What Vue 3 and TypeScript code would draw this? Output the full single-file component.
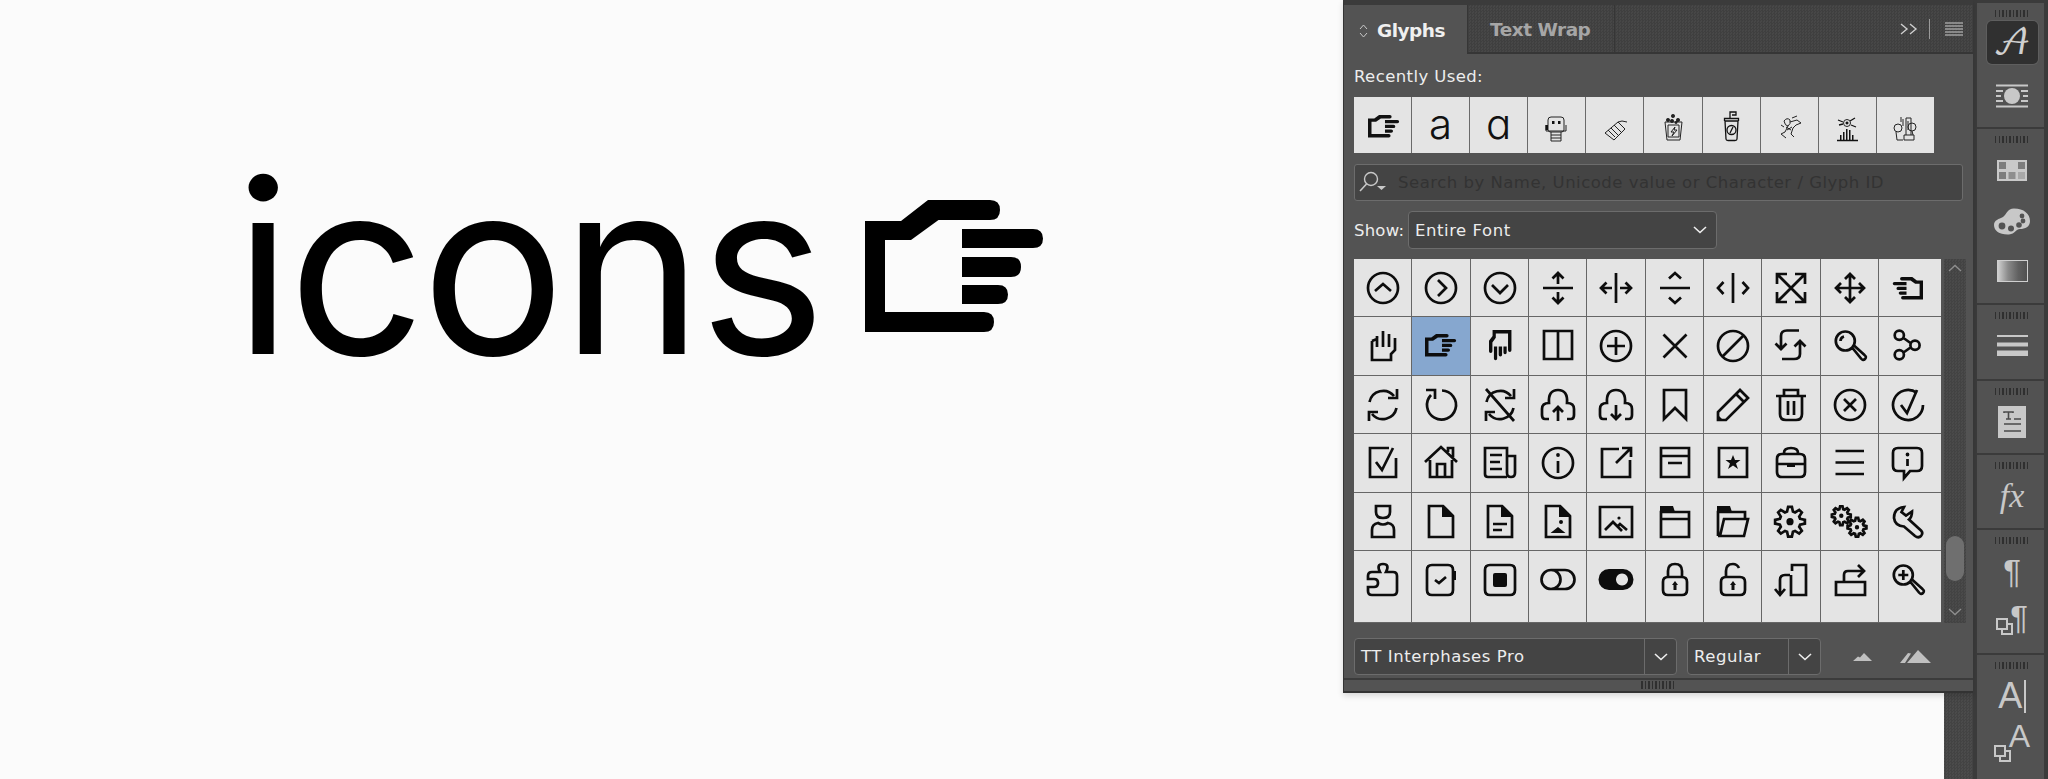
<script setup lang="ts">
interface Glyph { s?: string; f?: string; t?: string; sel?: boolean }

const C = (x: number, y: number, r: number): string =>
  `M${x - r} ${y}a${r} ${r} 0 1 0 ${2 * r} 0a${r} ${r} 0 1 0 ${-2 * r} 0Z`

const gear = (cx: number, cy: number, ro: number, ri: number, n: number): string => {
  const pts: string[] = []
  const step = (Math.PI * 2) / n
  for (let i = 0; i < n; i++) {
    const a = i * step
    const p = (r: number, o: number) =>
      `${(cx + r * Math.cos(a + o)).toFixed(2)} ${(cy + r * Math.sin(a + o)).toFixed(2)}`
    pts.push(p(ri, -step * 0.36), p(ro, -step * 0.16), p(ro, step * 0.16), p(ri, step * 0.36))
  }
  return 'M' + pts.join('L') + 'Z'
}

const HAND =
  'M0 21H36L63 0H125Q135 0 135 10Q135 20 125 20H73.5L46 40H20V112H119Q129 112 129 122Q129 132 119 132H0Z' +
  'M97 29H168Q178 29 178 38.5Q178 48 168 48H97Z' +
  'M97 57H146Q156 57 156 67Q156 77 146 77H97Z' +
  'M97 85H133Q143 85 143 94.5Q143 104 133 104H97Z'
const RIGHT = 'matrix(.175 0 0 .17 13 17)'
const HANDLE = 'M31.5 31L40 41.5Q42 44 44 42Q46 40 43.5 38L33 28.5'
const DOC = 'M17 13H31L41 23V44H17Z'
const CORNER = 'M30 12V24H42V22.5L31.5 12Z'
const SYNC = 'M15.5 26A14 14 0 0 1 40 20M34 22H43V13M42.5 32A14 14 0 0 1 18 38M24 36H15V45'
const CLOUD = 'M20 43H16Q13 43 13 39V33Q13 27 20 27Q19 14 29 14Q39 14 38 27Q45 27 45 33V39Q45 43 42 43H38'
const LOCK = 'M22 26H36Q41 26 41 31V39Q41 44 36 44H22Q17 44 17 39V31Q17 26 22 26Z'
const KEY = 'M29 30L32 34H30.5V39H27.5V34H26Z'

const glyphs: Glyph[] = [
  { s: C(29, 29, 15) + 'M21 32l8-7 8 7' },
  { s: C(29, 29, 15) + 'M26 21l8 8-8 8' },
  { s: C(29, 29, 15) + 'M21 26l8 8 8-8' },
  { s: 'M14 29H44M29 25V14M23.5 19.5L29 14l5.5 5.5M29 33V44M23.5 38.5L29 44l5.5-5.5' },
  { s: 'M29 14V44M25 29H14M19.5 23.5L14 29l5.5 5.5M33 29H44M38.5 23.5L44 29l-5.5 5.5' },
  { s: 'M14 29H44M23 19.5l6-5.5 6 5.5M23 38.5l6 5.5 6-5.5' },
  { s: 'M29 14V44M19.5 23l-5.5 6 5.5 6M38.5 23l5.5 6-5.5 6' },
  { s: 'M15 15L43 43M43 15L15 43M15 25V15H25M33 15H43V25M15 33V43H25M43 33V43H33' },
  { s: 'M29 15V43M15 29H43M24 20l5-5 5 5M24 38l5 5 5-5M20 24l-5 5 5 5M38 24l5 5-5 5' },
  { f: HAND, t: 'matrix(-.17 0 0 .17 44 18)' },

  { s: 'M18 24L23 22V30M18 24V43H37V37L41 33V21M29 14V30M35 17V30M23 19V30' },
  { f: HAND, t: RIGHT, sel: true },
  { f: HAND, t: 'matrix(0 .17 .17 0 18 13)' },
  { s: 'M15 14H29V42H15ZM29 14H43V42H29Z' },
  { s: C(29, 29, 15) + 'M29 20V38M20 29H38' },
  { s: 'M17.5 17.5L40.5 40.5M40.5 17.5L17.5 40.5' },
  { s: C(29, 29, 15) + 'M19 39L39 19' },
  { s: 'M37 13.5H25Q19 13.5 19 19V33M13.5 26.5L19 32l5.5-5.5M20 42H32Q38 42 38 37V24M32.5 29.5L38 24l5.5 5.5' },
  { s: C(24.3, 24, 9.5) + HANDLE + 'M19.5 24Q19.5 20.5 23 19.5' },
  { s: C(20.3, 18.3, 4.6) + C(36, 28.3, 4.6) + C(20.3, 37.8, 4.6) + 'M24.5 21L31.5 26M24.5 35.5L31.5 30.5' },

  { s: SYNC },
  { s: 'M30 14.5A14.5 14.5 0 1 1 19 19M14 14H23V23' },
  { s: SYNC + 'M15 13L43 45' },
  { s: CLOUD + 'M29 45V31M24 36l5-5 5 5' },
  { s: CLOUD + 'M29 29V43M24 38l5 5 5-5' },
  { s: 'M18 14H40V43L29 32L18 43Z' },
  { s: 'M14 44V36L36 14L44 22L22 44ZM32 18L40 26', f: 'M13 45V38L20 45Z' },
  { s: 'M14 20H44M22 20V14H36V20M18 20V38Q18 44 24 44H34Q40 44 40 38V20M26 25V39M32 25V39' },
  { s: C(29, 29, 15) + 'M23 23L35 35M35 23L23 35' },
  { s: 'M38 17A15 15 0 1 0 44 29M22 29L28 37L38 14' },

  { s: 'M42 24V43H16V14H35M22 28L28 36L39 14' },
  { s: 'M13 28L29 13L45 28M18 26V43H40V26M25 43V30H33V43M36 18V14H41V23' },
  { s: 'M36 43H17Q14 43 14 40V14H36V39Q36 43 40 43Q44 43 44 39V22H36M19 21H31M19 28H29M19 35H31' },
  { s: C(29, 29, 15) + 'M29 27V39', f: C(29, 21, 1.9) },
  { s: 'M32 15H15V43H43V26M29 29L43 15M35 14H44V23' },
  { s: 'M15 14H43V43H15ZM15 22H43M22 29H36' },
  { s: 'M15 14H43V43H15Z', f: 'M29 21L31 26H36.5L32 29.5L34 35L29 31.5L24 35L26 29.5L21.5 26H27Z' },
  { s: 'M20 20H38Q43 20 43 25V38Q43 43 38 43H20Q15 43 15 38V25Q15 20 20 20ZM22 20V19Q22 14 29 14Q36 14 36 19V20M15 30H43', f: 'M25 29H33V33H25Z' },
  { s: 'M14.5 17H43M14.5 28.5H43M14.5 40H43' },
  { s: 'M19 14H38Q43 14 43 19V32Q43 37 38 37H31L25 44V37H19Q14 37 14 32V19Q14 14 19 14ZM28.5 25V32', f: C(28.5, 20.5, 1.9) },

  { s: 'M22 13H36V19Q36 25 29 25Q22 25 22 19ZM18 44V37Q18 31 24 30Q29 33 34 30Q40 31 40 37V44Z' },
  { s: DOC, f: CORNER },
  { s: DOC + 'M22 31H36M22 37H31', f: CORNER },
  { s: DOC, f: CORNER + 'M21.5 40L29 34L36.5 40ZM30 29a2 2 0 1 0 4 0a2 2 0 1 0-4 0Z' },
  { s: 'M13 14H45V44H13ZM18 37L26 29L35 38M31 33L33 31L40 37', f: C(32, 25, 1.6) },
  { s: 'M15 44V19H43V44ZM15 26H43', f: 'M14 13H27L29 19H14Z' },
  { s: 'M14 43V19H41V26M14 43H40L44 26H20L16 43', f: 'M13 13H26L28 19H13Z' },
  { s: gear(28, 28.7, 15, 10.5, 8), f: C(28, 28.7, 3.6) },
  { s: gear(20.3, 22.7, 9.5, 6.8, 8) + gear(36, 34.3, 9.5, 6.8, 8), f: C(20.3, 22.7, 2.2) + C(36, 34.3, 2.2) },
  { s: 'M25 14Q15 15 15 25Q16 33 25 33.5L36 43Q39.5 45.5 42 43Q44.5 40 42 37.5L30 26.5Q33 24 33 18.5L27 22.5L22.5 19Z' },

  { s: 'M26 21Q22 13 29 13Q36 13 32 21H39Q43 21 43 25V40Q43 44 39 44H18Q14 44 14 40V36H20Q24 36 24 32Q24 28 20 28H14V25Q14 21 18 21Z' },
  { s: 'M20 14H36Q41 14 41 19V39Q41 44 36 44H20Q15 44 15 39V19Q15 14 20 14ZM23 29l4 3 7-6', f: 'M41 20H44V29H41Z' },
  { s: 'M19 14H39Q44 14 44 19V39Q44 44 39 44H19Q14 44 14 39V19Q14 14 19 14Z', f: 'M24 22H34Q36 22 36 24V34Q36 36 34 36H24Q22 36 22 34V24Q22 22 24 22Z' },
  { s: 'M22 19H36A9.5 9.5 0 0 1 36 38H22A9.5 9.5 0 0 1 22 19Z' + C(22, 28.5, 9.5) },
  { f: 'M22 18H36A10.5 10.5 0 0 1 36 39H22A10.5 10.5 0 0 1 22 18ZM35 22.5a6 6 0 1 0 .01 0Z' },
  { s: LOCK + 'M22 26V20Q22 13 29 13Q36 13 36 20V26', f: KEY },
  { s: LOCK + 'M22 26V20Q22 13 29 13Q33 13 35 17', f: KEY },
  { s: 'M30 20V14H44V44H29V24M28 24H23Q18 24 18 29V43M13 38l5 6 5-6' },
  { s: 'M23 31H44V44H15V31H23ZM23 31V24Q23 20 27 20H42M37 14L43 20L37 26' },
  { s: C(24.3, 24, 9.5) + HANDLE + 'M24.3 19V29M19.3 24H29.3' }
]
</script>

<template>
  <div class="page">
    <main class="canvas">
      <div class="logo">
        <span class="word">icons</span>
        <svg class="big-hand" viewBox="0 0 178 132" width="178" height="132" aria-hidden="true"><path :d="HAND" fill="#000" /></svg>
      </div>
    </main>
    <div class="gutter"></div>
    <aside class="toolbar">
      <section class="tool-sec s1">
        <i class="grip"></i>
        <div class="char-btn"><span class="script-a">𝒜</span></div>
        <svg class="wrap-ic" width="32" height="24" viewBox="0 0 32 24"><path d="M0 1.5H32M0 22.5H32M0 7H7M25 7H32M0 12H5M27 12H32M0 17H7M25 17H32" stroke="#c8c8c8" stroke-width="2" /><circle cx="16" cy="12" r="8" fill="#c8c8c8" /></svg>
      </section>
      <section class="tool-sec s2">
        <i class="grip"></i>
        <svg class="tool-ic swatches" width="30" height="21" viewBox="0 0 30 21"><rect width="30" height="21" fill="#c9c9c9" /><path d="M2 2h7v7H2zM21 2h7v7h-7zM2 12h7v7H2z" fill="#7d7d7d" /><path d="M11.5 12h7v7h-7z" fill="#8e8e8e" /><path d="M21 12h7v7h-7z" fill="#a8a8a8" /></svg>
        <svg class="tool-ic palette" width="36" height="27" viewBox="0 0 36 27"><path d="M20 .5C30 .5 36 6 36 13 36 19 31 21 26 21 22 21 21 26 15 26.500 6 27 0 23 0 17 0 12 5 11 9 9 13 6 13 .5 20 .5Z" fill="#c8c8c8" /><circle cx="8" cy="18" r="3.400" fill="#535353" /><circle cx="17" cy="20.500" r="3" fill="#535353" /><circle cx="25" cy="17" r="2.800" fill="#535353" /><circle cx="29" cy="13" r="2.400" fill="#535353" /><circle cx="28" cy="8" r="2.400" fill="#535353" /></svg>
        <div class="gradient"></div>
      </section>
      <section class="tool-sec s3">
        <i class="grip"></i>
        <svg class="tool-ic lines" width="31" height="21" viewBox="0 0 31 21"><path d="M0 0h31v2H0zM0 7.500h31v4H0zM0 15.500h31V21H0z" fill="#c8c8c8" /></svg>
      </section>
      <section class="tool-sec s4">
        <i class="grip"></i>
        <svg class="tool-ic doc" width="28" height="32" viewBox="0 0 28 32"><rect width="28" height="32" fill="#c8c8c8" /><path d="M6 7V6H15V7M10.500 6V13M8 13H13M16 13H23M6 18H23M6 25H23" stroke="#4a4a4a" stroke-width="1.600" fill="none" /></svg>
      </section>
      <section class="tool-sec s5">
        <i class="grip"></i>
        <span class="fx">fx</span>
      </section>
      <section class="tool-sec s6">
        <i class="grip"></i>
        <div class="para"><span class="para-t">¶</span></div>
        <div class="para para2">
          <svg width="17" height="17" viewBox="0 0 17 17"><path d="M1 1H11V11H1ZM6 11V16H16V6H11" fill="none" stroke="#c8c8c8" stroke-width="2" /></svg>
          <span class="para-t">¶</span>
        </div>
      </section>
      <section class="tool-sec s7">
        <i class="grip"></i>
        <div class="a-bar"><span class="big-a">A</span><i class="caret"></i></div>
        <div class="a-sq">
          <svg width="17" height="17" viewBox="0 0 17 17"><path d="M1 1H11V11H1ZM6 11V16H16V6H11" fill="none" stroke="#c8c8c8" stroke-width="2" /></svg>
          <span class="big-a small">A</span>
        </div>
      </section>
    </aside>

    <div class="panel">
      <div class="tabs">
        <div class="tab active">
          <svg width="9" height="14" viewBox="0 0 9 14"><path d="M1 5l3.500-4L8 5M1 9l3.500 4L8 9" fill="none" stroke="#c8c8c8" stroke-width="1" /></svg>
          <span>Glyphs</span>
        </div>
        <div class="tab off">Text Wrap</div>
        <div class="tab-tools">
          <svg width="18" height="12" viewBox="0 0 18 12"><path d="M1 1l6 5-6 5M10 1l6 5-6 5" fill="none" stroke="#cfcfcf" stroke-width="1.400" /></svg>
          <i class="tab-sep"></i>
          <svg width="18" height="14" viewBox="0 0 18 14"><path d="M0 1h18M0 4h18M0 7h18M0 10h18M0 13h18" stroke="#cfcfcf" stroke-width="1.200" /></svg>
        </div>
      </div>

      <div class="body">
        <div class="recent-label">Recently Used:</div>
        <div class="recent">
          <div class="cell"><svg viewBox="0 0 58 58"><path :d="HAND" fill="#111" transform="matrix(.175 0 0 .17 14 18)" /></svg></div>
          <div class="cell letter"><span>a</span></div>
          <div class="cell letter"><span>ɑ</span></div>
          <div class="cell"><svg viewBox="0 0 58 58"><g class="thin"><path d="M23 20H33Q36 20 36 23V33Q36 35 33 35H23Q20 35 20 33V23Q20 20 23 20ZM18 28V34H38V28M23 35V38H33V35M23 38V44H33V38M23 41H33" /></g><path d="M24 24h2.500v3H24zM30 24h2.500v3H30zM17.500 28h2.500v5h-2.500z" fill="#111" /></svg></div>
          <div class="cell"><svg viewBox="0 0 58 58"><g class="thin"><path d="M19 36L32 25L39 32L28 43ZM22 33L29 40M25 31L32 38M28 28L35 35M32 25L36 24L41 25" /></g></svg></div>
          <div class="cell"><svg viewBox="0 0 58 58"><g class="thin"><path d="M21 25L23 43H36L38 25ZM24 28H35V40H24ZM31 30L27 35H30L28 39L33 33H30Z" /></g><path d="M24 21a2 2 0 1 0 .01 0ZM29 17a2 2 0 1 0 .01 0ZM34 21a2 2 0 1 0 .01 0ZM28 22a2 2 0 1 0 .01 0ZM32 24a1.500 1.500 0 1 0 .01 0Z" fill="#222" /></svg></div>
          <div class="cell"><svg viewBox="0 0 58 58"><g class="thin2"><path d="M22 24H35L34 42Q34 43.500 32 43.500H25Q23 43.500 23 42ZM21.500 24V21.500H35.500V24M27 21V15H33V18H29" /><circle cx="28.500" cy="33" r="4.500" /><path d="M27 36L30 30" /></g></svg></div>
          <div class="cell"><svg viewBox="0 0 58 58"><g class="thin"><path d="M23 24Q26 20 29 23Q30 27 27 29Q24 29 23 24ZM29 25L36 23L40 26L35 28L32 31L30 37L33 40M27 29L24 35L20 37L25 41M20 28L23 30M31 21L36 19M25 30L30 33M26 33L31 30" /></g></svg></div>
          <div class="cell"><svg viewBox="0 0 58 58"><circle cx="28" cy="26" r="3.500" class="thin" /><path d="M28 24.500a1.500 1.500 0 1 0 .01 0Z" fill="#111" /><path d="M19 23L24 25M31 24L36 21M20 28L24 27M32 28L37 30M18 43.500H39" stroke="#111" stroke-width="1.300" fill="none" /><path d="M21 38h1.500v5H21zM24 35h1.500v8H24zM27 32h1.500v11H27zM30 33h1.500v10H30zM33 38h1.500v5H33z" fill="#111" /></svg></div>
          <div class="cell"><svg viewBox="0 0 58 58"><g class="thin"><circle cx="21" cy="31" r="4" /><circle cx="35" cy="30" r="4" /><path d="M19 35L20 43H26M35 34L36 38M27 38H37V43H27ZM29 38V21H34V38M31 24V33M26 22V29M24 20V25" /></g></svg></div>
        </div>

        <div class="search">
          <svg width="30" height="26" viewBox="0 0 30 26"><circle cx="13" cy="9" r="6.500" fill="none" stroke="#c8c8c8" stroke-width="1.400" /><path d="M8.500 14L2 21" stroke="#c8c8c8" stroke-width="1.600" /><path d="M19 16h9l-4.500 4z" fill="#c8c8c8" /></svg>
          <span class="placeholder">Search by Name, Unicode value or Character / Glyph ID</span>
        </div>

        <div class="show-row">
          <span class="ui show-label">Show:</span>
          <div class="select show-sel"><span class="ui">Entire Font</span>
            <svg width="14" height="8" viewBox="0 0 14 8"><path d="M1 1l6 5.500L13 1" fill="none" stroke="#eee" stroke-width="1.600" /></svg>
          </div>
        </div>

        <div class="grid-row">
          <div class="grid">
            <div v-for="(g, i) in glyphs" :key="i" class="cell" :class="{ sel: g.sel }">
              <svg viewBox="0 0 58 58">
                <path v-if="g.s" :d="g.s" class="st" />
                <path v-if="g.f" :d="g.f" :transform="g.t" class="fl" />
              </svg>
            </div>
          </div>
          <div class="scroll">
            <svg width="14" height="8" viewBox="0 0 14 8"><path d="M1 7l6-5.500L13 7" fill="none" stroke="#8f8f8f" stroke-width="1.300" /></svg>
            <div class="thumb"></div>
            <svg class="down" width="14" height="8" viewBox="0 0 14 8"><path d="M1 1l6 5.500L13 1" fill="none" stroke="#8f8f8f" stroke-width="1.300" /></svg>
          </div>
        </div>

        <div class="font-row">
          <div class="select font-sel"><span class="ui">TT Interphases Pro</span>
            <div class="sel-btn"><svg width="14" height="8" viewBox="0 0 14 8"><path d="M1 1l6 5.500L13 1" fill="none" stroke="#eee" stroke-width="1.600" /></svg></div>
          </div>
          <div class="select style-sel"><span class="ui">Regular</span>
            <div class="sel-btn"><svg width="14" height="8" viewBox="0 0 14 8"><path d="M1 1l6 5.500L13 1" fill="none" stroke="#eee" stroke-width="1.600" /></svg></div>
          </div>
          <svg class="mt1" width="19" height="8" viewBox="0 0 19 8"><path d="M0 8L5 3.500L7 4.500L11 0L19 8Z" fill="#c0c0c0" /></svg>
          <svg class="mt2" width="31" height="13" viewBox="0 0 31 13"><path d="M0 13L8 3L11 3.500L5 13ZM7 13L18 0L31 13Z" fill="#c0c0c0" /></svg>
        </div>
      </div>

      <div class="panel-foot"><i class="grip foot-grip"></i></div>
    </div>
  </div>
</template>

<style scoped>
.page {
  position: relative;
  display: flex;
  width: 2048px;
  height: 779px;
  overflow: hidden;
  background: #fbfbfb;
  font-family: "DejaVu Sans", "Noto Sans", sans-serif;
}
.canvas { width: 1944px; flex: none; padding: 122px 0 0 234px; box-sizing: border-box; }
.logo { display: flex; align-items: flex-start; color: #000; }
.word {
  display: block;
  width: 631px;
  font-family: Inter, sans-serif;
  font-size: 240px;
  line-height: 290px;
  font-weight: 400;
  letter-spacing: -4px;
  white-space: nowrap;
}
.big-hand { flex: none; margin-top: 78px; }
.gutter {
  width: 29px;
  flex: none;
  background: repeating-conic-gradient(#434343 0 25%, #4b4b4b 0 50%) 0 0 / 3px 3px;
}
.toolbar {
  width: 75px;
  flex: none;
  box-sizing: border-box;
  padding: 3px 4px 0 4px;
  background: #3b3b3b;
  display: flex;
  flex-direction: column;
  gap: 2px;
}
.tool-sec {
  display: flex;
  flex-direction: column;
  align-items: center;
  padding: 7px 0 0 3px;
  box-sizing: border-box;
  background: #525252;
  flex: none;
}
.s1 { height: 124px; }
.s2 { height: 174px; }
.s3 { height: 74px; }
.s4 { height: 72px; }
.s5 { height: 73px; }
.s6 { height: 123px; }
.s7 { height: 130px; }
.grip {
  display: block;
  width: 35px;
  height: 7px;
  flex: none;
  background: repeating-linear-gradient(90deg, #2f2f2f 0 1.500px, transparent 1.500px 3.550px);
}
.char-btn {
  width: 51px;
  height: 43px;
  margin-top: 4px;
  border-radius: 5px;
  background: #303030;
  box-shadow: 0 0 0 1px #5e5e5e;
  display: flex;
  justify-content: center;
  align-items: center;
}
.script-a {
  font-family: "DejaVu Math TeX Gyre", "DejaVu Serif", "DejaVu Sans", serif;
  font-size: 36px;
  color: #d0d0d0;
  line-height: 1;
}
.wrap-ic { margin-top: 20px; }
.tool-ic { flex: none; display: block; }
.swatches { margin-top: 17px; }
.palette { margin-top: 27px; }
.gradient {
  width: 31px;
  height: 22px;
  margin-top: 25px;
  box-sizing: border-box;
  border: 1px solid #cfcfcf;
  background: linear-gradient(90deg, #cfcfcf, #8a8a8a 35%, #606060 70%, #505050);
}
.lines { margin-top: 16px; }
.doc { margin-top: 11px; }
.fx {
  margin-top: 7px;
  font-family: "Liberation Serif", serif;
  font-style: italic;
  font-size: 34px;
  line-height: 40px;
  color: #c8c8c8;
}
.para { display: flex; align-items: flex-end; height: 34px; margin-top: 11px; color: #c8c8c8; }
.para2 { margin-top: 12px; height: 34px; }
.para-t { font-family: "Liberation Sans", sans-serif; font-size: 33px; line-height: 34px; }
.para2 svg { margin-right: -3px; }
.a-bar, .a-sq { display: flex; align-items: flex-end; color: #c8c8c8; }
.a-bar { height: 34px; margin-top: 10px; }
.a-sq { height: 34px; margin-top: 15px; }
.a-sq svg { margin-right: -2px; }
.big-a { font-family: "Liberation Sans", sans-serif; font-size: 36px; line-height: 34px; }
.big-a.small { font-size: 32px; margin-bottom: 9px; }
.caret { display: block; width: 1.500px; height: 33px; background: #c8c8c8; margin-left: 2px; }

.panel {
  position: absolute;
  left: 1343px;
  top: 0;
  width: 630px;
  height: 693px;
  box-sizing: border-box;
  display: flex;
  flex-direction: column;
  background: #535353;
  border-top: 5px solid #3b3b3b;
  border-left: 1px solid #333;
  box-shadow: 0 3px 6px rgba(0, 0, 0, .14);
}
.tabs {
  height: 49px;
  flex: none;
  display: flex;
  box-sizing: border-box;
  background: repeating-conic-gradient(#3f3f3f 0 25%, #474747 0 50%) 0 0 / 3px 3px;
  border-bottom: 2px solid #363636;
}
.tab { display: flex; align-items: center; font-weight: 700; font-size: 18.500px; box-sizing: border-box; padding-top: 2px; letter-spacing: -.5px; }
.tab.active {
  width: 124px;
  height: 49px;
  padding-left: 15px;
  gap: 9px;
  background: #535353;
  color: #f0f0f0;
  border-right: 1px solid #363636;
}
.tab.off {
  width: 147px;
  padding-left: 22px;
  color: #a6a6a6;
  border-right: 1px solid #363636;
}
.tab-tools { margin-left: auto; display: flex; align-items: center; gap: 11px; padding-right: 10px; }
.tab-sep { display: block; width: 1px; height: 20px; background: #9a9a9a; margin: 0 4px 0 0; }
.body { flex: 1; padding: 0 0 0 10px; min-height: 0; display: flex; flex-direction: column; }
.ui { font-size: 16.500px; color: #ededed; white-space: nowrap; letter-spacing: .55px; }
.recent-label { height: 43px; flex: none; line-height: 45px; font-size: 16.500px; color: #ededed; letter-spacing: .4px; }
.recent {
  display: grid;
  grid-template-columns: repeat(10, 57.100px);
  grid-auto-rows: 56px;
  gap: 1px;
  width: max-content;
  background: #6a6a6a;
  flex: none;
}
.cell { background: #e4e4e4; overflow: hidden; }
.cell svg { display: block; width: 58px; height: 58px; }
.letter { display: flex; justify-content: center; align-items: center; }
.letter span { font-family: Inter, sans-serif; font-size: 42px; font-weight: 300; color: #111; line-height: 1; margin-top: -2px; }
.thin { fill: none; stroke: #222; stroke-width: 1; }
.thin2 { fill: none; stroke: #111; stroke-width: 1.300; }
.search {
  margin-top: 11px;
  width: 609px;
  height: 37px;
  flex: none;
  box-sizing: border-box;
  display: flex;
  align-items: center;
  padding-left: 3px;
  gap: 10px;
  background: #444;
  border: 1px solid #6c6c6c;
  border-radius: 3px;
}
.placeholder { font-size: 16.500px; color: #333; white-space: nowrap; letter-spacing: .5px; }
.show-row { display: flex; align-items: center; margin-top: 10px; height: 38px; flex: none; }
.show-label { width: 54px; flex: none; letter-spacing: .2px; }
.select {
  box-sizing: border-box;
  display: flex;
  align-items: center;
  background: #444;
  border: 1.500px solid #6c6c6c;
  border-radius: 4px;
}
.show-sel { width: 309px; height: 38px; justify-content: space-between; padding: 0 9px 0 6px; }
.grid-row { display: flex; margin-top: 10px; flex: none; height: 364px; }
.grid {
  width: 587px;
  height: 364px;
  overflow: hidden;
  display: grid;
  grid-template-columns: repeat(9, 57.330px) 62px;
  grid-template-rows: repeat(5, 57.400px) 71px;
  gap: 1px;
  background: #666;
}
.cell.sel { background: #86a7cf; }
.st { fill: none; stroke: #0d0d0d; stroke-width: 2.700; stroke-linejoin: miter; }
.fl { fill: #0d0d0d; }
.scroll {
  width: 22px;
  margin-left: 3px;
  display: flex;
  flex-direction: column;
  align-items: center;
  padding-top: 5px;
  box-sizing: border-box;
  background: repeating-conic-gradient(#434343 0 25%, #4a4a4a 0 50%) 0 0 / 3px 3px;
}
.thumb { width: 18px; height: 45px; margin-top: 264px; border-radius: 9px; background: #6f6f6f; }
.down { margin-top: 27px; }
.font-row { display: flex; align-items: center; margin-top: 15px; height: 37px; flex: none; }
.font-sel, .style-sel { height: 37px; padding-left: 6px; justify-content: space-between; }
.font-sel { width: 323px; }
.style-sel { width: 134px; margin-left: 10px; }
.sel-btn { width: 32px; height: 100%; display: flex; align-items: center; justify-content: center; border-left: 1.500px solid #6c6c6c; box-sizing: border-box; }
.mt1 { margin-left: 32px; }
.mt2 { margin-left: 28px; }
.panel-foot {
  height: 15px;
  flex: none;
  box-sizing: border-box;
  background: #535353;
  border-top: 2px solid #3b3b3b;
  border-bottom: 2px solid #333;
  display: flex;
  justify-content: center;
}
.foot-grip { height: 8px; margin-top: 1px; }
</style>

<style>
html, body { margin: 0; background: #fbfbfb; }
</style>
